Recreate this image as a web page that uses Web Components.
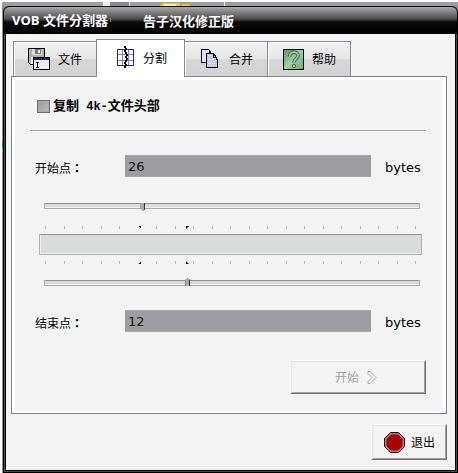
<!DOCTYPE html>
<html lang="zh-CN">
<head>
<meta charset="utf-8">
<title>VOB 文件分割器</title>
<style>
  body {
    margin: 0;
    background: #fff;
    color: #000;
    font: 12px/16px "Noto Sans CJK SC", sans-serif;
  }
</style>
</head>
<body>
<vob-desktop>
  <vob-window>
    <span slot="title">VOB 文件分割器</span>
    <span slot="note">告子汉化修正版</span>

    <vob-tabs>
      <vob-tab icon="file">文件</vob-tab>
      <vob-tab icon="split" active>分割</vob-tab>
      <vob-tab icon="merge">合并</vob-tab>
      <vob-tab icon="help">帮助</vob-tab>
    </vob-tabs>

    <vob-panel>
      <vob-check>复制</vob-check>
      <vob-field label="开始点" value="26" unit="bytes"></vob-field>
      <vob-range start="26" end="38"></vob-range>
      <vob-field label="结束点" value="12" unit="bytes"></vob-field>
      <vob-button slot="action" kind="start" disabled>开始</vob-button>
    </vob-panel>

    <vob-button slot="footer" kind="exit">退出</vob-button>
  </vob-window>
</vob-desktop>

<script>
const icons = {
  file: `
    <svg width="22" height="22" viewBox="0 0 22 22" shape-rendering="crispEdges">
      <path d="M0 0h17v17H2v-1H1v-1H0z" fill="#000"/>
      <path d="M1 1h15v15H2v-1H1z" fill="#b0b0b0"/>
      <path d="M4 1h10v6H4z" fill="#dcdcdc"/>
      <path d="M7 1h6v5H7z" fill="#777"/>
      <path d="M10 2h2v3h-2z" fill="#eee"/>
      <path d="M3 9h11v7H3z" fill="#f4f4f4"/>
      <path d="M5 9h17v13H5z" fill="#000"/>
      <path d="M6 12h15v9H6z" fill="#ececf4"/>
      <path d="M6 10h15v2H6z" fill="#26266e"/>
      <path d="M8 14h3v1H8zM9 15h1v4H9zM8 19h3v1H8z" fill="#000"/>
    </svg>`,
  split: `
    <svg width="18" height="23" viewBox="0 0 18 23" shape-rendering="crispEdges">
      <path d="M1 4h16v15H1z" fill="#fff"/>
      <path d="M0 3h17v1H0zM0 19h17v1H0zM0 3h1v17H0zM16 3h1v17h-1z" fill="#25257c"/>
      <path d="M5 4h1v15H5zM11 4h1v15h-1zM1 8h15v1H1zM1 14h15v1H1z" fill="#8484c4"/>
      <path d="M7 0h2v2H7zM8 2h2v2H8zM7 4h2v2H7zM8 6h2v2H8zM9 8h2v2H9zM8 10h2v2H8zM9 12h2v2H9zM8 14h2v2H8zM7 16h2v2H7zM8 18h2v2H8zM7 20h2v2H7z" fill="#000"/>
    </svg>`,
  merge: `
    <svg width="18" height="20" viewBox="0 0 18 20" shape-rendering="crispEdges">
      <path d="M0 0h8v1h1v1h1v12H0z" fill="#000"/>
      <path d="M1 1h7v12H1z" fill="#e2e2f4"/>
      <path d="M5 4h8v1h1v1h1v2h1v2h1v9H5z" fill="#000"/>
      <path d="M6 5h6v2h2v2h1v2h1v7H6z" fill="#c6c6e4"/>
      <path d="M7 6h1v1H7zM9 6h1v1H9zM8 8h1v1H8zM10 8h1v1h-1zM7 10h1v1H7zM9 10h1v1H9zM11 10h1v1h-1zM8 12h1v1H8zM10 12h1v1h-1zM12 12h1v1h-1zM7 14h1v1H7zM9 14h1v1H9zM11 14h1v1h-1zM13 14h1v1h-1zM8 16h1v1H8zM10 16h1v1h-1zM12 16h1v1h-1z" fill="#fff"/>
      <path d="M12 5h1v4h-1zM12 8h3v1h-3z" fill="#000"/>
    </svg>`,
  help: `
    <svg width="21" height="21" viewBox="0 0 21 21">
      <defs>
        <linearGradient id="g" x1="0" y1="0" x2="1" y2="1">
          <stop offset="0" stop-color="#5f9668"/>
          <stop offset=".5" stop-color="#a0d0a6"/>
          <stop offset="1" stop-color="#6fa878"/>
        </linearGradient>
      </defs>
      <rect width="21" height="21" fill="#000"/>
      <rect x="1" y="1" width="19" height="19" fill="url(#g)"/>
      <path d="M6.500 8c0-6 8.500-6 8.500-1.500c0 3-4 3.500-4 7" fill="none" stroke="#3c6745" stroke-width="3.600"/>
      <path d="M6.500 8c0-6 8.500-6 8.500-1.500c0 3-4 3.500-4 7" fill="none" stroke="#a5d2aa" stroke-width="1.600"/>
      <circle cx="11" cy="17" r="1.700" fill="#a5d2aa" stroke="#3c6745"/>
    </svg>`,
  start: `
    <svg width="10" height="13" viewBox="0 0 10 13">
      <path d="M1 .5h2l6 6l-6 6h-2v-2l4-4l-4-4z" fill="#fafafa" stroke="#a2a2a2"/>
    </svg>`,
  exit: `
    <svg width="21" height="21" viewBox="0 0 21 21">
      <path d="M6.500.5h8l6 6v8l-6 6h-8l-6-6v-8z" fill="#cf6a6a" stroke="#000"/>
      <path d="M7 3h7l4 4v7l-4 4H7l-4-4V7z" fill="#a80508" stroke="#8a1518"/>
    </svg>`
}

class VobDesktop extends HTMLElement {
  constructor () {
    super()
    this.attachShadow({ mode: 'open' }).innerHTML = `
      <style>
        :host {
          display: flex;
          flex-direction: column;
          box-sizing: border-box;
          min-height: 100vh;
          padding-top: 2px;
        }
        .behind {
          display: flex;
          height: 4px;
          margin-left: 2px;
          background: #9d9da1;
        }
        .behind svg {
          display: block;
        }
        .row {
          flex: 1;
          display: flex;
          background: linear-gradient(90deg, #fff 2px, #8e8e8e 2px);
        }
        .edge {
          width: 3px;
          background: linear-gradient(transparent 134px, #2fa52f 134px, #2fa52f 141px, transparent 141px) 2px 0 no-repeat;
        }
        slot {
          display: flex;
          flex: 1;
        }
      </style>
      <div class="behind">
        <svg width="240" height="4" viewBox="0 0 240 4" shape-rendering="crispEdges">
          <path d="M101 0h7v4h-7z" fill="#ededed"/>
          <path d="M108 0h19v4h-19z" fill="#8b8b90"/>
          <path d="M127 0h1v4h-1zM222 0h1v4h-1z" fill="#e4e4e4"/>
          <path d="M160 1h18v3h-20zM180 2h8v2h-10z" fill="#e9c93b"/>
          <path d="M162 2h12v2h-12z" fill="#fff0a0"/>
        </svg>
      </div>
      <div class="row"><div class="edge"></div><slot></slot></div>
    `
  }
}

class VobWindow extends HTMLElement {
  constructor () {
    super()
    this.attachShadow({ mode: 'open' }).innerHTML = `
      <style>
        :host {
          flex: 1;
          display: flex;
          flex-direction: column;
          box-sizing: border-box;
          padding: 0 2px 2px;
          border: 1px solid #000;
          border-top: 0;
          border-radius: 6px 6px 0 0;
          background: #f3f3f3;
          box-shadow: inset 1px -1px #4a4a4a, inset -1px 0 #4a4a4a, inset 0 0 0 2px #000;
          overflow: hidden;
        }
        header {
          display: flex;
          gap: 32px;
          margin: 0 -2px;
          padding: 6px 8px;
          border-top: 1px solid #111;
          border-radius: 6px 6px 0 0;
          background: linear-gradient(#a8a8a8, #4c4c4c 12px, #0a0a0a 15px, #000);
          color: #fff;
          font: bold 13px/15px "Noto Sans CJK SC", sans-serif;
        }
        .name {
          font-family: "Open Sans", "Noto Sans CJK SC", sans-serif;
        }
        .caret {
          width: 1px;
          height: 4px;
          margin: 5px 0 0 -30px;
          background: #4f8fd0;
        }
        main {
          flex: 1;
          display: flex;
          flex-direction: column;
          padding: 5px 8px 10px 5px;
        }
        footer {
          display: flex;
          justify-content: flex-end;
          margin-top: 10px;
        }
      </style>
      <header>
        <div class="name"><slot name="title"></slot></div>
        <div class="caret"></div>
        <div><slot name="note"></slot></div>
      </header>
      <main>
        <slot></slot>
        <footer><slot name="footer"></slot></footer>
      </main>
    `
  }
}

class VobTabs extends HTMLElement {
  constructor () {
    super()
    this.attachShadow({ mode: 'open' }).innerHTML = `
      <style>
        :host {
          display: flex;
          align-items: flex-end;
          padding-left: 2px;
          margin-bottom: -1px;
          z-index: 1;
        }
      </style>
      <slot></slot>
    `
  }
}

class VobTab extends HTMLElement {
  constructor () {
    super()
    this.attachShadow({ mode: 'open' })
  }

  connectedCallback () {
    this.shadowRoot.innerHTML = `
      <style>
        :host {
          display: block;
          padding-bottom: 1px;
        }
        button {
          display: flex;
          align-items: center;
          gap: 8px;
          box-sizing: border-box;
          height: 35px;
          margin: 0;
          padding: 0 14px;
          border: 1px solid #878a94;
          border-width: 1px 1px 0 0;
          box-shadow: inset 1px 1px #fff;
          background: linear-gradient(#f1f1f1, #e6e6e6 50%, #d6d6d6 52%, #d2d2d2);
          color: #000;
          font: inherit;
        }
        :host(:first-child) button {
          border-left-width: 1px;
        }
        :host([active]) {
          margin-left: -1px;
          padding-bottom: 0;
        }
        :host([active]) button {
          gap: 6px;
          height: 38px;
          padding: 0 17px 2px 18px;
          border-left-width: 1px;
          background: #fff;
        }
        .icon {
          display: flex;
          justify-content: center;
          width: 22px;
        }
      </style>
      <button type="button"><span class="icon">${icons[this.getAttribute('icon')]}</span><slot></slot></button>
    `
  }
}

class VobPanel extends HTMLElement {
  constructor () {
    super()
    this.attachShadow({ mode: 'open' }).innerHTML = `
      <style>
        :host {
          flex: 1;
          display: flex;
          flex-direction: column;
          border: 1px solid #80838c;
          background: #fff;
          padding: 3px 3px 2px;
        }
        .page {
          flex: 1;
          display: flex;
          flex-direction: column;
          padding: 16px 17px 15px 15px;
          background: #f3f3f3;
        }
        .action {
          display: flex;
          justify-content: flex-end;
          margin-top: 28px;
        }
      </style>
      <div class="page">
        <slot></slot>
        <div class="action"><slot name="action"></slot></div>
      </div>
    `
  }
}

class VobCheck extends HTMLElement {
  constructor () {
    super()
    this.attachShadow({ mode: 'open' }).innerHTML = `
      <style>
        :host {
          display: block;
          padding-bottom: 14px;
          margin-bottom: 24px;
          border-bottom: 1px solid #a3a3a3;
          box-shadow: 0 1px #fff;
        }
        label {
          display: flex;
          align-items: center;
          gap: 3px;
          height: 20px;
          padding-left: 7px;
          font-size: 13px;
          font-weight: bold;
          white-space: pre;
        }
        input {
          appearance: none;
          width: 13px;
          height: 13px;
          margin: 0;
          border: 1px solid #6f6f6f;
          background: linear-gradient(135deg, #9c9c9c, #bcbcbc);
          box-shadow: inset 0 0 0 1px #a9a9a9;
        }
        .latin {
          font-family: "Liberation Mono", monospace;
          font-size: 12px;
        }
      </style>
      <label><input type="checkbox"><span><slot></slot><span class="latin"> 4k-</span>文件头部</span></label>
    `
  }
}

class VobField extends HTMLElement {
  constructor () {
    super()
    this.attachShadow({ mode: 'open' })
  }

  connectedCallback () {
    this.shadowRoot.innerHTML = `
      <style>
        :host {
          display: flex;
          align-items: center;
          height: 22px;
          padding-left: 5px;
        }
        label {
          width: 90px;
          padding-top: 4px;
        }
        .colon {
          font-family: "Noto Sans CJK TC", sans-serif;
          font-weight: bold;
        }
        input {
          flex: 1;
          min-width: 0;
          box-sizing: border-box;
          height: 22px;
          margin: 0;
          padding: 0 3px;
          border: 1px solid #a8a8ae;
          border-width: 1px 0 1px;
          background: #9e9da2;
          color: #111;
          font: 13px/20px "DejaVu Sans", sans-serif;
        }
        .unit {
          width: 41px;
          padding: 4px 0 0 14px;
          font: 13px/16px "DejaVu Sans", sans-serif;
        }
      </style>
      <label for="value">${this.getAttribute('label')}<span class="colon" lang="zh-TW">：</span></label>
      <input id="value" type="text" value="${this.getAttribute('value')}">
      <span class="unit">${this.getAttribute('unit')}</span>
    `
  }
}

class VobSlider extends HTMLElement {
  constructor () {
    super()
    this.attachShadow({ mode: 'open' })
  }

  connectedCallback () {
    this.shadowRoot.innerHTML = `
      <style>
        :host {
          display: block;
          padding: 0 6px 0 14px;
        }
        input {
          appearance: none;
          display: block;
          width: 100%;
          height: 8px;
          margin: 0;
          background: none;
        }
        input::-webkit-slider-runnable-track {
          box-sizing: border-box;
          height: 8px;
          background:
            linear-gradient(#a9acaa, #a9acaa) 0 0 / 1px 6px no-repeat,
            linear-gradient(#a9acaa, #a9acaa) 100% 0 / 1px 6px no-repeat,
            linear-gradient(#8f9290 1px, #d9dcda 1px, #d9dcda 4px, #f4f4f4 4px, #f4f4f4 5px, #a9acaa 5px) 0 0 / 100% 6px no-repeat;
        }
        input::-webkit-slider-thumb {
          appearance: none;
          width: 5px;
          height: 8px;
          background: linear-gradient(90deg, #8a8a8a 1px, #b5b5b5 1px, #a0a0a0 4px, #333 4px);
          clip-path: polygon(0 0, 100% 0, 100% 75%, 60% 100%, 40% 100%, 0 75%);
        }
        :host([up]) input::-webkit-slider-runnable-track {
          background-position: 0 2px, 100% 2px, 0 2px;
        }
        :host([up]) input::-webkit-slider-thumb {
          clip-path: polygon(0 100%, 100% 100%, 100% 25%, 60% 0, 40% 0, 0 25%);
        }
      </style>
      <input type="range" min="0" max="100" value="${this.getAttribute('value')}" aria-label="${this.getAttribute('label')}">
    `
  }
}

class VobRange extends HTMLElement {
  constructor () {
    super()
    this.attachShadow({ mode: 'open' })
  }

  connectedCallback () {
    const start = this.getAttribute('start')
    const end = this.getAttribute('end')
    const ticks = '<i></i>'.repeat(21)

    this.shadowRoot.innerHTML = `
      <style>
        :host {
          display: block;
          padding: 26px 0 24px;
        }
        .ticks {
          position: relative;
          display: flex;
          justify-content: space-between;
          height: 3px;
          margin: 15px 10px 5px 15px;
        }
        .ticks.below {
          margin: 6px 10px 14px 15px;
        }
        i {
          width: 1px;
          background: #b4b4b4;
        }
        i:nth-child(6) {
          visibility: hidden;
        }
        b {
          position: absolute;
          top: 0;
          width: 3px;
          height: 3px;
          background: #000;
        }
        .from {
          right: ${100 - start}%;
          clip-path: polygon(0 0, 100% 0, 100% 100%);
        }
        .to {
          left: ${end}%;
          clip-path: polygon(0 0, 100% 0, 0 100%);
        }
        .below .from {
          clip-path: polygon(100% 0, 100% 100%, 0 100%);
        }
        .below .to {
          clip-path: polygon(0 0, 100% 100%, 0 100%);
        }
        .bar {
          box-sizing: border-box;
          height: 21px;
          margin: 0 4px 0 9px;
          border: 1px solid #aeb1af;
          border-top-color: #8f9290;
          border-radius: 1px;
          background: #d9dcda;
          box-shadow: inset 1px -1px #f0f1f0;
        }
      </style>
      <vob-slider value="${start}" label="开始点"></vob-slider>
      <div class="ticks">${ticks}<b class="from"></b><b class="to"></b></div>
      <div class="bar"></div>
      <div class="ticks below">${ticks}<b class="from"></b><b class="to"></b></div>
      <vob-slider up value="${end}" label="结束点"></vob-slider>
    `
  }
}

class VobButton extends HTMLElement {
  constructor () {
    super()
    this.attachShadow({ mode: 'open' })
  }

  connectedCallback () {
    const kind = this.getAttribute('kind')
    const disabled = this.hasAttribute('disabled') ? 'disabled' : ''

    this.shadowRoot.innerHTML = `
      <style>
        :host {
          display: block;
        }
        button {
          display: flex;
          align-items: center;
          justify-content: center;
          gap: 8px;
          box-sizing: border-box;
          height: 36px;
          border: 1px solid;
          border-color: #fff #707070 #707070 #fff;
          box-shadow: inset 1px 1px #e2e2e2, inset -1px -1px #a0a0a0;
          background: #f3f3f3;
          color: #000;
          font: inherit;
        }
        .exit {
          flex-direction: row-reverse;
          gap: 6px;
          padding: 0 11px 0 12px;
        }
        .start {
          width: 136px;
          height: 34px;
          padding: 0 4px 0 0;
          color: #a2a2a2;
        }
        svg {
          display: block;
        }
      </style>
      <button type="button" class="${kind}" ${disabled}><slot></slot>${icons[kind]}</button>
    `
  }
}

customElements.define('vob-desktop', VobDesktop)
customElements.define('vob-window', VobWindow)
customElements.define('vob-tabs', VobTabs)
customElements.define('vob-tab', VobTab)
customElements.define('vob-panel', VobPanel)
customElements.define('vob-check', VobCheck)
customElements.define('vob-field', VobField)
customElements.define('vob-slider', VobSlider)
customElements.define('vob-range', VobRange)
customElements.define('vob-button', VobButton)
</script>
</body>
</html>
